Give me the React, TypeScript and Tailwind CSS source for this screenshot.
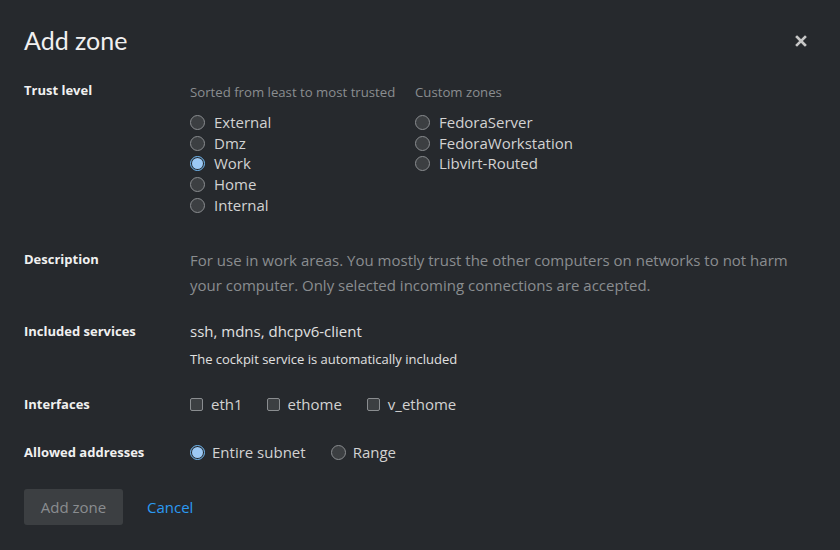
import React from "react";

const Radio = ({ checked }: { checked?: boolean }) =>
  checked ? (
    <span className="w-[15px] h-[15px] rounded-full border border-[#73bcf7] bg-[#26292d] flex items-center justify-center shrink-0">
      <span className="w-[11px] h-[11px] rounded-full bg-[#9cc9f5]" />
    </span>
  ) : (
    <span className="w-[15px] h-[15px] rounded-full border border-[#8a8d90] bg-[#3c3f42] shrink-0" />
  );

const Check = () => (
  <span className="w-[13px] h-[13px] rounded-[2px] border border-[#8a8d90] bg-[#3c3f42] shrink-0" />
);

const RadioItem = ({ label, checked }: { label: string; checked?: boolean }) => (
  <div className="flex items-center gap-[9px] h-[20.7px]">
    <Radio checked={checked} />
    <span className="text-[15px] text-[#d2d2d2] leading-none">{label}</span>
  </div>
);

export default function App() {
  return (
    <div
      className="w-[840px] h-[550px] bg-[#26292d] text-white px-6 pt-[24px]"
      style={{ fontFamily: "'Open Sans', 'Noto Sans', sans-serif" }}
    >
      <div className="flex items-center justify-between h-[34px]">
        <h1 className="text-[25px] text-[#f0f0f0] font-normal" style={{ fontFamily: "Lato, sans-serif" }}>
          Add zone
        </h1>
        <svg width="12" height="12" viewBox="0 0 12 12" className="mr-[9px]">
          <path d="M2 2 L10 10 M10 2 L2 10" stroke="#c7c7c7" strokeWidth="2.6" strokeLinecap="square" />
        </svg>
      </div>

      <div className="grid grid-cols-[166px_1fr] mt-[22px] text-[14px]">
        <div className="font-bold text-[13px] text-[#f0f0f0] leading-[20px]">Trust level</div>
        <div className="flex">
          <div className="w-[225px]">
            <div className="text-[13.2px] text-[#8a8d90] leading-[20px] mt-[2px]">Sorted from least to most trusted</div>
            <div className="mt-[10px] flex flex-col">
              <RadioItem label="External" />
              <RadioItem label="Dmz" />
              <RadioItem label="Work" checked />
              <RadioItem label="Home" />
              <RadioItem label="Internal" />
            </div>
          </div>
          <div>
            <div className="text-[13.2px] text-[#8a8d90] leading-[20px] mt-[2px]">Custom zones</div>
            <div className="mt-[10px] flex flex-col">
              <RadioItem label="FedoraServer" />
              <RadioItem label="FedoraWorkstation" />
              <RadioItem label="Libvirt-Routed" />
            </div>
          </div>
        </div>

        <div className="font-bold text-[13px] text-[#f0f0f0] leading-[20px] mt-[34px]">Description</div>
        <div className="text-[15px] text-[#8a8d90] leading-[25px] mt-[33px] pr-[20px]">
          For use in work areas. You mostly trust the other computers on networks to not harm your computer. Only
          selected incoming connections are accepted.
        </div>

        <div className="font-bold text-[13px] text-[#f0f0f0] leading-[20px] mt-[23px]">Included services</div>
        <div className="mt-[22px]">
          <div className="text-[15px] text-[#e0e0e0] leading-[22px]">ssh, mdns, dhcpv6-client</div>
          <div className="text-[13px] text-[#e0e0e0] leading-[20px] mt-[7px]">The cockpit service is automatically included</div>
        </div>

        <div className="font-bold text-[13px] text-[#f0f0f0] leading-[20px] mt-[25px]">Interfaces</div>
        <div className="mt-[25px] flex items-center h-[20px]">
          <div className="flex items-center gap-[8px] mr-[24px]">
            <Check />
            <span className="text-[15px] text-[#d2d2d2]">eth1</span>
          </div>
          <div className="flex items-center gap-[8px] mr-[25px]">
            <Check />
            <span className="text-[15px] text-[#d2d2d2]">ethome</span>
          </div>
          <div className="flex items-center gap-[8px]">
            <Check />
            <span className="text-[15px] text-[#d2d2d2]">v_ethome</span>
          </div>
        </div>

        <div className="font-bold text-[13px] text-[#f0f0f0] leading-[20px] mt-[28px]">Allowed addresses</div>
        <div className="mt-[28px] flex items-center h-[20px]">
          <div className="flex items-center gap-[7px] mr-[25px]">
            <Radio checked />
            <span className="text-[15px] text-[#d2d2d2]">Entire subnet</span>
          </div>
          <div className="flex items-center gap-[7px]">
            <Radio />
            <span className="text-[15px] text-[#d2d2d2]">Range</span>
          </div>
        </div>
      </div>

      <div className="flex items-center mt-[27px] gap-[24px]">
        <button className="w-[99px] h-[36px] rounded-[3px] bg-[#3c3f42] text-[15px] text-[#8a8d90]">Add zone</button>
        <button className="text-[15px] text-[#2b9af3]">Cancel</button>
      </div>
    </div>
  );
}
